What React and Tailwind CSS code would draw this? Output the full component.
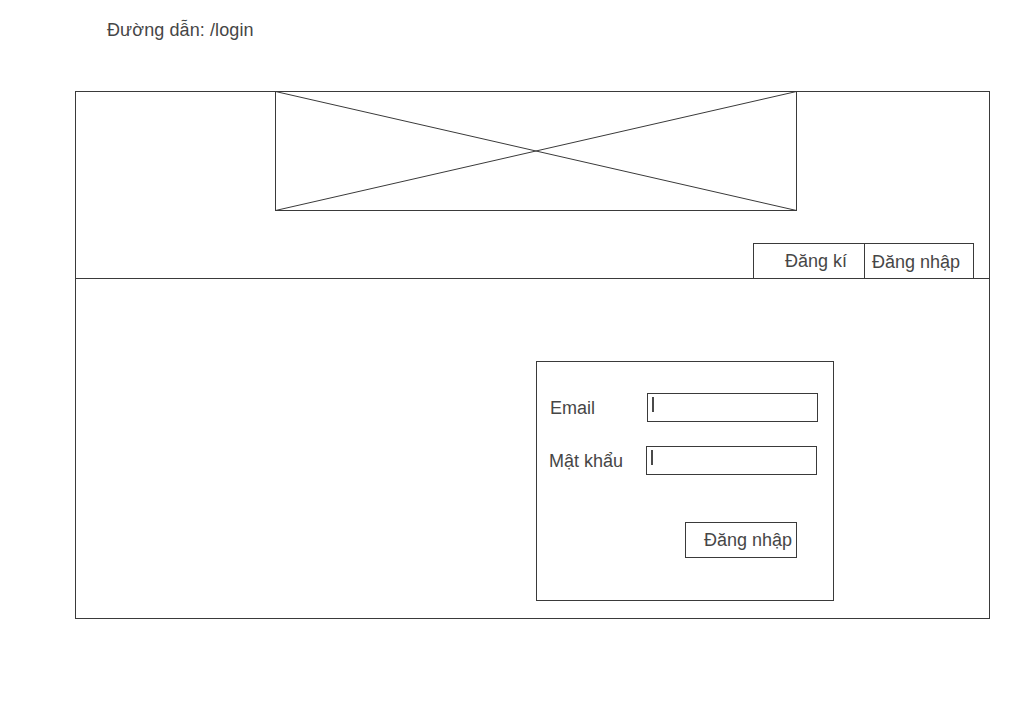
const FONT = { fontFamily: '"Liberation Sans", Arial, Helvetica, sans-serif' }

function Placeholder() {
  return (
    <svg width="522" height="120" viewBox="0 0 522 120" className="block -mt-px ml-[199px]">
      <rect x="0.5" y="0.5" width="521" height="119" fill="none" stroke="#3a3a3a" strokeWidth="1" />
      <line x1="0.5" y1="0.5" x2="521.5" y2="119.5" stroke="#3a3a3a" strokeWidth="1" />
      <line x1="521.5" y1="0.5" x2="0.5" y2="119.5" stroke="#3a3a3a" strokeWidth="1" />
    </svg>
  )
}

function Field({ label, pad }) {
  return (
    <div className={`flex items-center ${pad}`}>
      <span className="w-[97px] leading-none">{label}</span>
      <div className="w-[171px] h-[29px] border border-[#3a3a3a] pl-[4px] pt-[3px]">
        <div className="w-[2px] h-[15px] bg-[#4a4a4a]" />
      </div>
    </div>
  )
}

export default function App() {
  return (
    <div className="w-[1024px] h-[728px] bg-white text-[18px] text-[#464646]" style={FONT}>
      <div className="pt-[18px] pl-[107px] leading-[24px] tracking-[0.1px]">Đường dẫn: /login</div>

      <div className="mt-[49px] ml-[75px] w-[915px] h-[528px] border border-[#3a3a3a]">
        <div className="h-[187px] border-b border-[#3a3a3a] flex flex-col">
          <Placeholder />
          <div className="mt-auto flex justify-end pr-[15px]">
            <div className="w-[111px] h-[35px] border-l border-t border-[#3a3a3a] flex items-center pl-[31px] leading-none">
              Đăng kí
            </div>
            <div className="w-[110px] h-[35px] border-l border-t border-r border-[#3a3a3a] flex items-center pl-[7px] pt-[2px] leading-none">
              Đăng nhập
            </div>
          </div>
        </div>

        <div className="pt-[82px] pl-[460px]">
          <div className="w-[298px] h-[240px] border border-[#3a3a3a] pt-[31px]">
            <Field label="Email" pad="pl-[13px]" />
            <Field label="Mật khẩu" pad="pl-[12px] mt-[24px]" />
            <div className="mt-[47px] ml-[148px] w-[112px] h-[36px] border border-[#3a3a3a] flex items-center pl-[18px] leading-none overflow-hidden whitespace-nowrap">
              Đăng nhập
            </div>
          </div>
        </div>
      </div>
    </div>
  )
}
